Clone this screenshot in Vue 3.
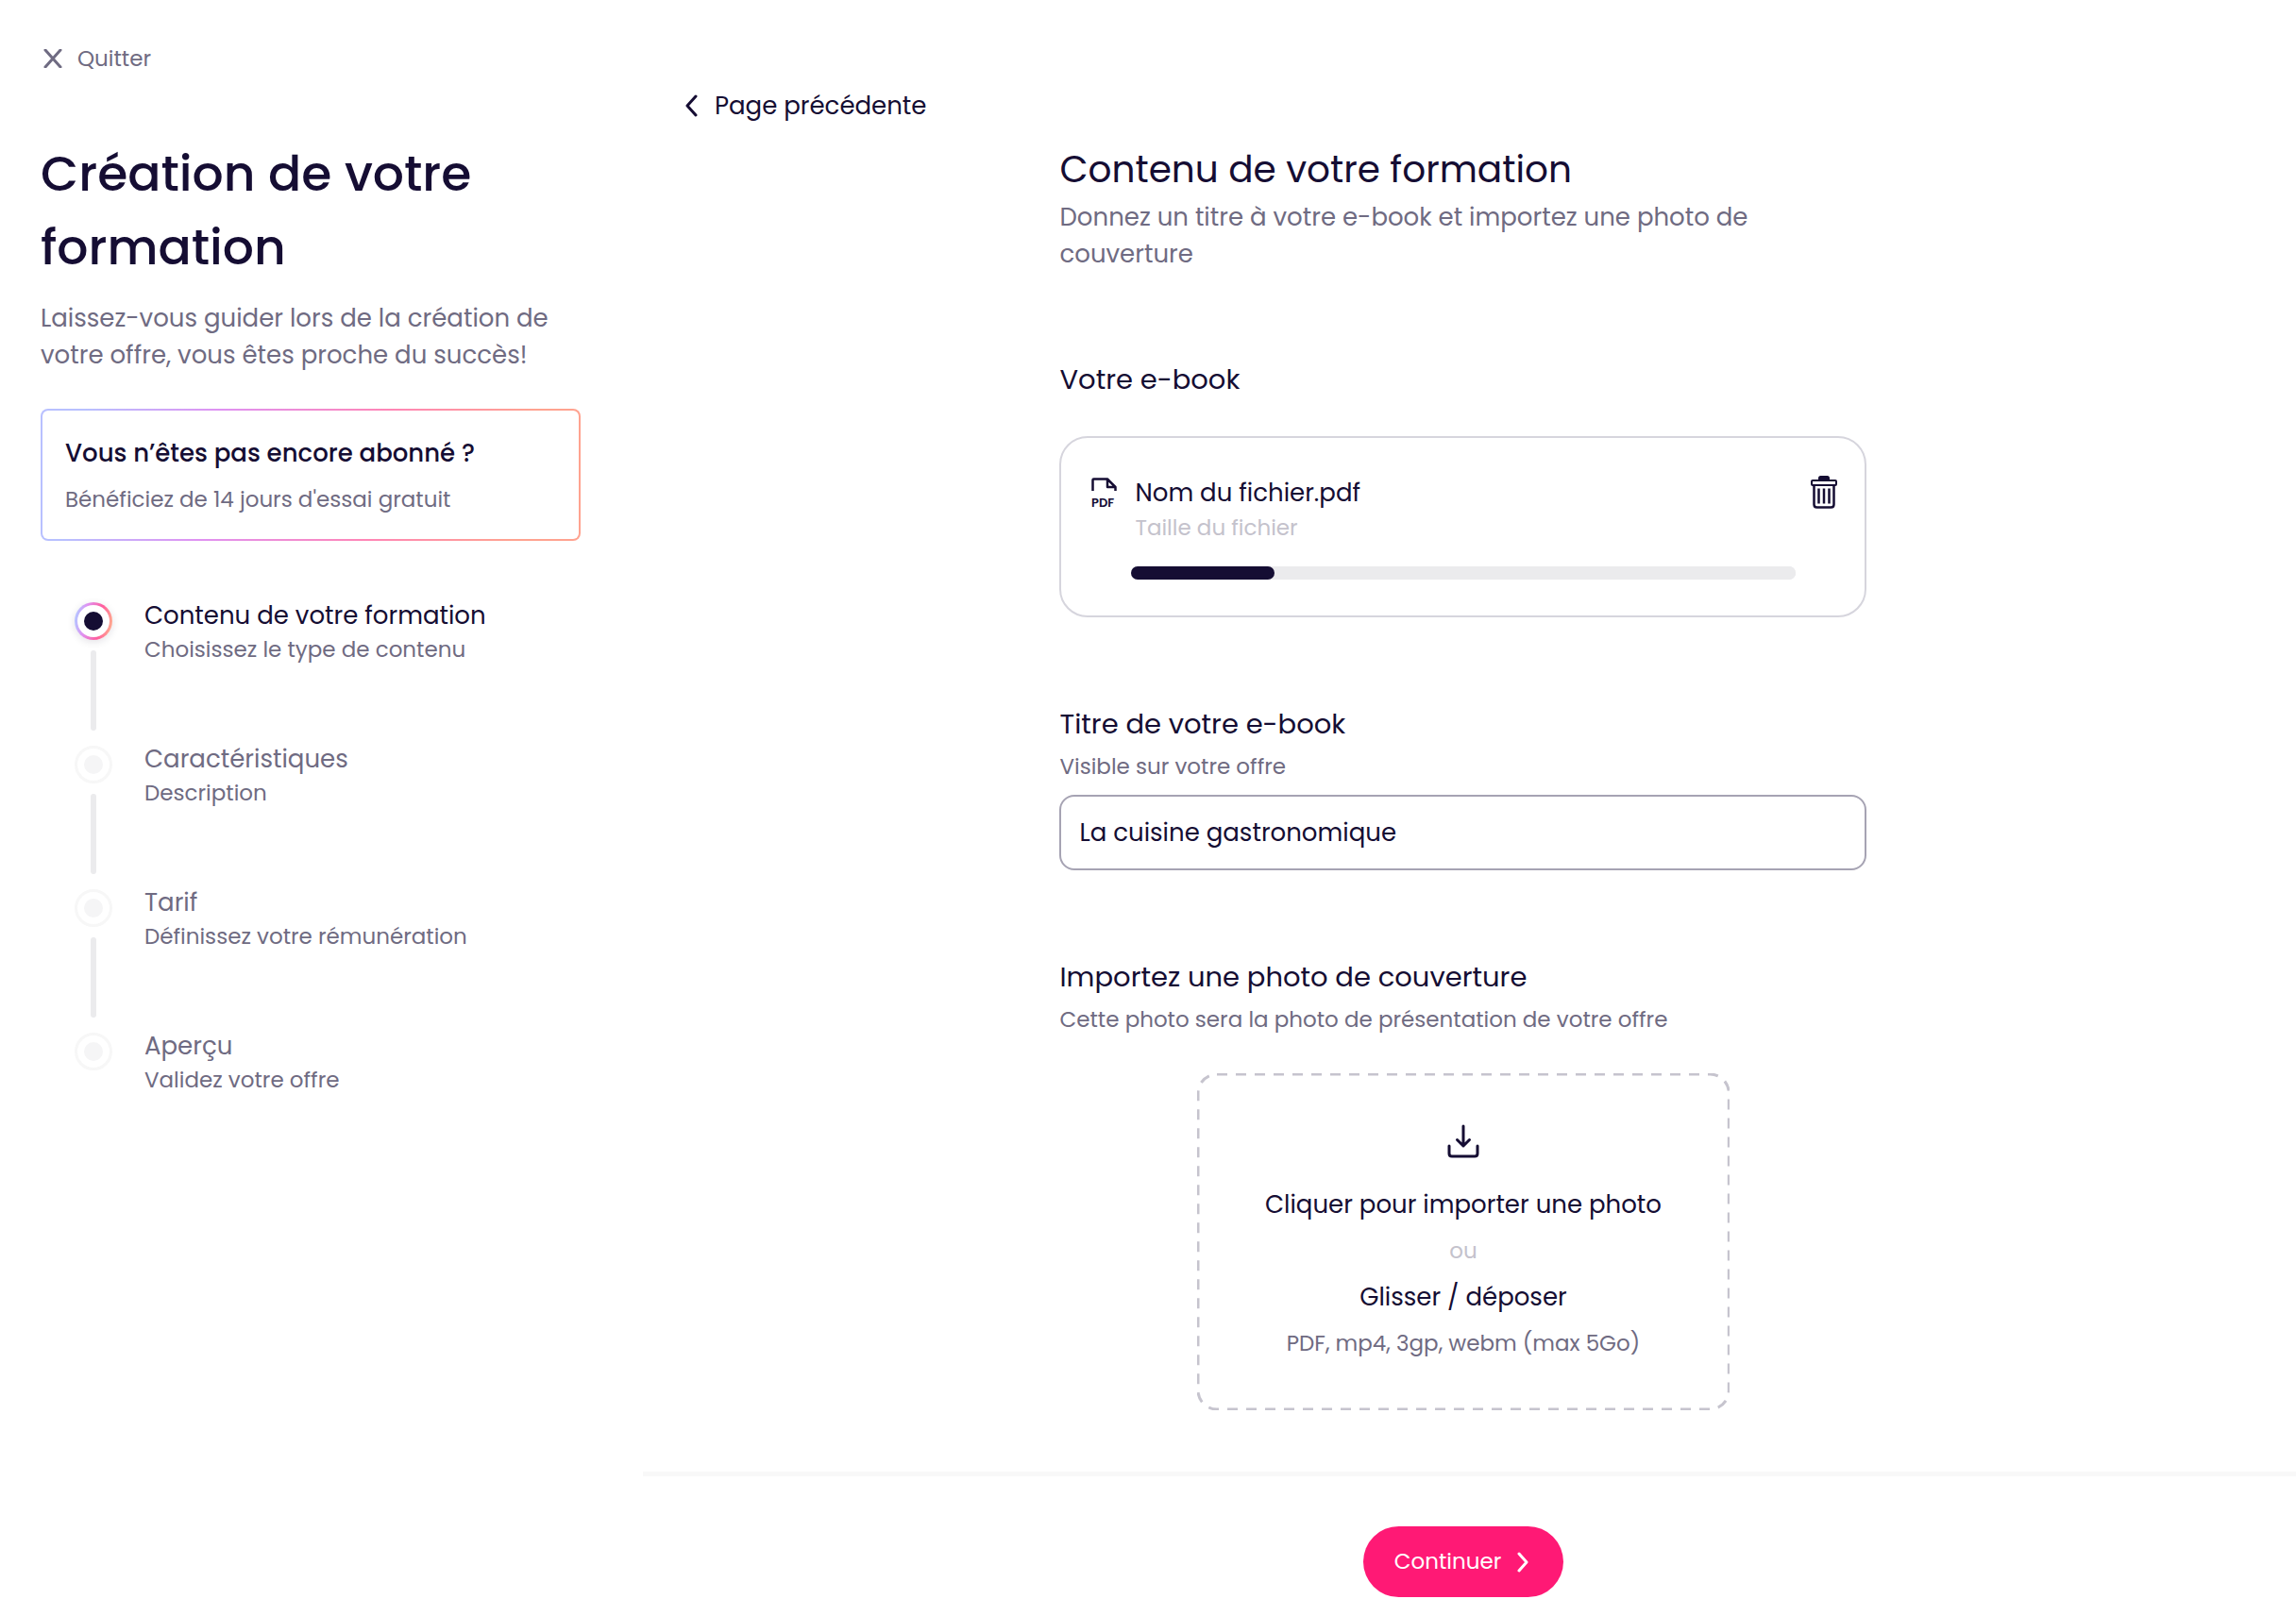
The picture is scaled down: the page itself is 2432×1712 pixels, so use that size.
<script setup>
import { ref } from 'vue'

const title = ref('La cuisine gastronomique')
const progress = ref(21.5)

const steps = [
  { name: 'Contenu de votre formation', detail: 'Choisissez le type de contenu', active: true },
  { name: 'Caractéristiques', detail: 'Description' },
  { name: 'Tarif', detail: 'Définissez votre rémunération' },
  { name: 'Aperçu', detail: 'Validez votre offre' },
]
</script>

<template>
  <div class="page">
    <aside class="sidebar">
      <button type="button" class="quit">
        <svg width="20" height="20" viewBox="0 0 20 20" fill="none" stroke="currentColor" stroke-width="3" stroke-linecap="round" aria-hidden="true">
          <path d="M2 1 18 19M18 1 2 19" />
        </svg>
        Quitter
      </button>
      <h1>Création de votre formation</h1>
      <p class="intro">Laissez-vous guider lors de la création de votre offre, vous êtes proche du succès!</p>

      <section class="trial">
        <h2>Vous n’êtes pas encore abonné ?</h2>
        <p class="small">Bénéficiez de 14 jours d'essai gratuit</p>
      </section>

      <ol class="steps">
        <li v-for="step in steps" :key="step.name" class="step" :class="{ active: step.active }">
          <span class="rail">
            <span class="dot"></span>
            <span class="line"></span>
          </span>
          <span class="step-text">
            <span class="step-name">{{ step.name }}</span>
            <span class="step-detail">{{ step.detail }}</span>
          </span>
        </li>
      </ol>
    </aside>

    <main class="main">
      <div class="content">
        <a class="back" href="#">
          <svg width="14" height="24" viewBox="0 0 14 24" fill="none" stroke="currentColor" stroke-width="3" stroke-linecap="round" stroke-linejoin="round" aria-hidden="true">
            <path d="M12 2 3 12l9 10" />
          </svg>
          Page précédente
        </a>

        <form class="form" @submit.prevent>
          <h2 class="form-title">Contenu de votre formation</h2>
          <p class="lead">Donnez un titre à votre e-book et importez une photo de couverture</p>

          <section class="group">
            <h3 class="label">Votre e-book</h3>
            <div class="file">
              <svg class="pdf" width="30" height="36" viewBox="0 0 30 36" aria-hidden="true">
                <path d="M1.500 14V2.500q0-1 1-1H17l8.500 8.500V14M17 1.500V10h8.500" fill="none" stroke="currentColor" stroke-width="2.500" stroke-linejoin="round" />
                <text x="0" y="31" font-size="13" font-weight="600" fill="currentColor">PDF</text>
              </svg>
              <div class="file-body">
                <p class="file-name">Nom du fichier.pdf</p>
                <p class="file-size">Taille du fichier</p>
                <progress class="bar" max="100" :value="progress" aria-label="Import du fichier"></progress>
              </div>
              <button type="button" class="trash" aria-label="Supprimer le fichier">
                <svg width="30" height="38" viewBox="0 0 30 38" fill="none" stroke="currentColor" stroke-width="2" stroke-linejoin="round">
                  <path d="M10 6V4.500Q10 3 11.500 3h7Q20 3 20 4.500V6z" fill="currentColor" />
                  <rect x="2" y="7" width="26" height="5" rx="1" />
                  <path d="M4.500 12v20.500q0 3 3 3h15q3 0 3-3V12" stroke-width="2.500" />
                  <path d="M9.500 15.500v16M15 15.500v16M20.500 15.500v16" stroke-width="2.500" />
                </svg>
              </button>
            </div>
          </section>

          <section class="group">
            <label class="label" for="ebook-title">Titre de votre e-book</label>
            <p id="title-hint" class="hint">Visible sur votre offre</p>
            <input id="ebook-title" v-model="title" class="input" type="text" aria-describedby="title-hint" />
          </section>

          <section class="group">
            <h3 class="label">Importez une photo de couverture</h3>
            <p class="hint">Cette photo sera la photo de présentation de votre offre</p>
            <label class="drop">
              <svg class="dashes" aria-hidden="true"><rect x="1" y="1" rx="20" ry="20" /></svg>
              <input class="file-input" type="file" />
              <svg class="drop-icon" width="34" height="36" viewBox="0 0 34 36" fill="none" stroke="currentColor" stroke-width="3" stroke-linecap="round" stroke-linejoin="round" aria-hidden="true">
                <path d="M17 2v21M10.500 16.500 17 23l6.500-6.500" />
                <path d="M2 23v8q0 3 3 3h24q3 0 3-3v-8" />
              </svg>
              <span class="drop-main">Cliquer pour importer une photo</span>
              <span class="drop-or">ou</span>
              <span class="drop-main">Glisser / déposer</span>
              <span class="drop-types">PDF, mp4, 3gp, webm (max 5Go)</span>
            </label>
          </section>
        </form>
      </div>

      <footer class="footer">
        <button type="button" class="next">
          Continuer
          <svg width="14" height="22" viewBox="0 0 14 22" fill="none" stroke="currentColor" stroke-width="3" stroke-linecap="round" stroke-linejoin="round" aria-hidden="true">
            <path d="m3 2 8 9-8 9" />
          </svg>
        </button>
      </footer>
    </main>
  </div>
</template>

<style>
body {
  background: #fff;
}
</style>

<style scoped>
.page {
  --ink: #150d33;
  --muted: #6f6b82;
  --faint: #c4c2cc;
  --line: #ebebed;
  --rainbow: linear-gradient(100deg, #b8c0ff 8%, #df92f2 32%, #ff86b6 62%, #ffa390 88%);
  display: flex;
  min-height: 100vh;
  font-family: Poppins, Inter, "Open Sans", sans-serif;
  font-size: 26px;
  color: var(--ink);
}

h1, h2, h3, p, ol {
  margin: 0;
  padding: 0;
  font-weight: 400;
}

button, input {
  font: inherit;
  color: inherit;
}

button {
  padding: 0;
  border: 0;
  background: none;
  cursor: pointer;
}

svg {
  flex: none;
}

.sidebar {
  box-sizing: border-box;
  flex: 0 0 28%;
  padding: 44px 66px 44px 43px;
}

.quit {
  display: flex;
  align-items: center;
  gap: 16px;
  padding-left: 3px;
  font-size: 23px;
  line-height: 36px;
  color: var(--muted);
}

h1 {
  margin-top: 65px;
  font-size: 52px;
  font-weight: 500;
  line-height: 78px;
}

.intro {
  margin-top: 17px;
  line-height: 39px;
  color: var(--muted);
}

.trial {
  margin-top: 37px;
  padding: 25px 24px 24px;
  border: 2px solid transparent;
  border-radius: 8px;
  background: linear-gradient(#fff, #fff) padding-box, var(--rainbow) border-box;
}

.trial h2 {
  font-size: 26px;
  font-weight: 500;
  line-height: 40px;
}

.trial p {
  margin-top: 11px;
  font-size: 23px;
  line-height: 36px;
  color: var(--muted);
}

.steps {
  margin-top: 61px;
  list-style: none;
}

.step {
  display: flex;
  gap: 34px;
  padding-left: 36px;
  color: var(--muted);
}

.rail {
  display: flex;
  flex-direction: column;
  align-items: center;
  padding: 4px 0 12px;
}

.dot {
  display: flex;
  box-sizing: border-box;
  width: 40px;
  height: 40px;
  border: 3px solid #f7f7f7;
  border-radius: 50%;
}

.dot::before {
  content: "";
  width: 20px;
  height: 20px;
  margin: auto;
  border-radius: 50%;
  background: #f5f5f6;
}

.active .dot {
  border-color: transparent;
  background: linear-gradient(#fff, #fff) padding-box, linear-gradient(100deg, #b8c0ff 10%, #df92f2 30%, #ff5c9d 65%, #ffa390 90%) border-box;
  box-shadow: 0 2px 8px rgba(21, 13, 51, 0.12);
}

.active .dot::before {
  background: var(--ink);
}

.line {
  width: 6px;
  height: 85px;
  margin-top: 11px;
  border-radius: 3px;
  background: var(--line);
}

.step:last-child .line {
  display: none;
}

.step-text {
  display: flex;
  flex-direction: column;
}

.step-name {
  line-height: 37px;
}

.step-detail {
  font-size: 23px;
  line-height: 34px;
}

.active .step-name {
  color: var(--ink);
}

.active .step-detail {
  color: var(--muted);
}

.main {
  display: flex;
  flex: 1;
  flex-direction: column;
}

.content {
  padding: 92px 57px 65px 44px;
}

.back {
  display: flex;
  align-items: center;
  gap: 18px;
  width: fit-content;
  line-height: 40px;
  color: inherit;
  text-decoration: none;
}

.form {
  max-width: 855px;
  margin: 19px auto 0;
}

.form-title {
  font-size: 39px;
  line-height: 58px;
}

.lead {
  max-width: 760px;
  margin-top: 2px;
  line-height: 39px;
  color: var(--muted);
}

.group {
  margin-top: 92px;
}

.label {
  display: block;
  font-size: 29px;
  line-height: 42px;
}

.hint {
  margin-top: 6px;
  font-size: 23px;
  line-height: 36px;
  color: var(--muted);
}

.file {
  display: flex;
  align-items: flex-start;
  margin-top: 39px;
  padding: 38px 28px 38px 32px;
  border: 2px solid #d6d5dd;
  border-radius: 30px;
}

.pdf {
  margin-top: 4px;
}

.file-body {
  flex: 1;
  margin: 0 15px 0 12px;
}

.file-name, .file-size {
  padding-left: 4px;
}

.file-name {
  line-height: 40px;
}

.file-size {
  font-size: 23px;
  line-height: 34px;
  color: var(--faint);
}

.bar {
  display: block;
  appearance: none;
  width: 100%;
  height: 14px;
  margin-top: 24px;
  border: 0;
  border-radius: 7px;
  background: var(--line);
}

.bar::-webkit-progress-bar {
  border-radius: 7px;
  background: var(--line);
}

.bar::-webkit-progress-value {
  border-radius: 7px;
  background: var(--ink);
}

.trash {
  display: flex;
}

.input {
  display: block;
  box-sizing: border-box;
  width: 100%;
  height: 80px;
  margin-top: 12px;
  padding: 0 19px;
  border: 2px solid #a6a3b3;
  border-radius: 16px;
  background: #fff;
  outline: none;
}

.drop {
  position: relative;
  display: flex;
  box-sizing: border-box;
  flex-direction: column;
  align-items: center;
  gap: 12px;
  width: 66%;
  margin: 39px auto 0;
  padding: 54px 0;
  cursor: pointer;
}

.dashes {
  position: absolute;
  inset: 0;
  width: 100%;
  height: 100%;
}

.dashes rect {
  width: calc(100% - 2px);
  height: calc(100% - 2px);
  fill: none;
  stroke: #c6c4ce;
  stroke-width: 3;
  stroke-dasharray: 11 9;
}

.file-input {
  position: absolute;
  width: 1px;
  height: 1px;
  opacity: 0;
}

.drop-icon {
  margin-bottom: 17px;
}

.drop-main {
  line-height: 40px;
}

.drop-or, .drop-types {
  font-size: 23px;
  line-height: 34px;
}

.drop-or {
  color: var(--faint);
}

.drop-types {
  color: var(--muted);
}

.footer {
  display: flex;
  justify-content: center;
  padding: 53px 57px 21px 44px;
  border-top: 5px solid #f8f8f8;
}

.next {
  display: flex;
  align-items: center;
  gap: 16px;
  padding: 0 36px 0 33px;
  border-radius: 38px;
  background: #ff1975;
  font-size: 23px;
  line-height: 75px;
  color: #fff;
}
</style>
